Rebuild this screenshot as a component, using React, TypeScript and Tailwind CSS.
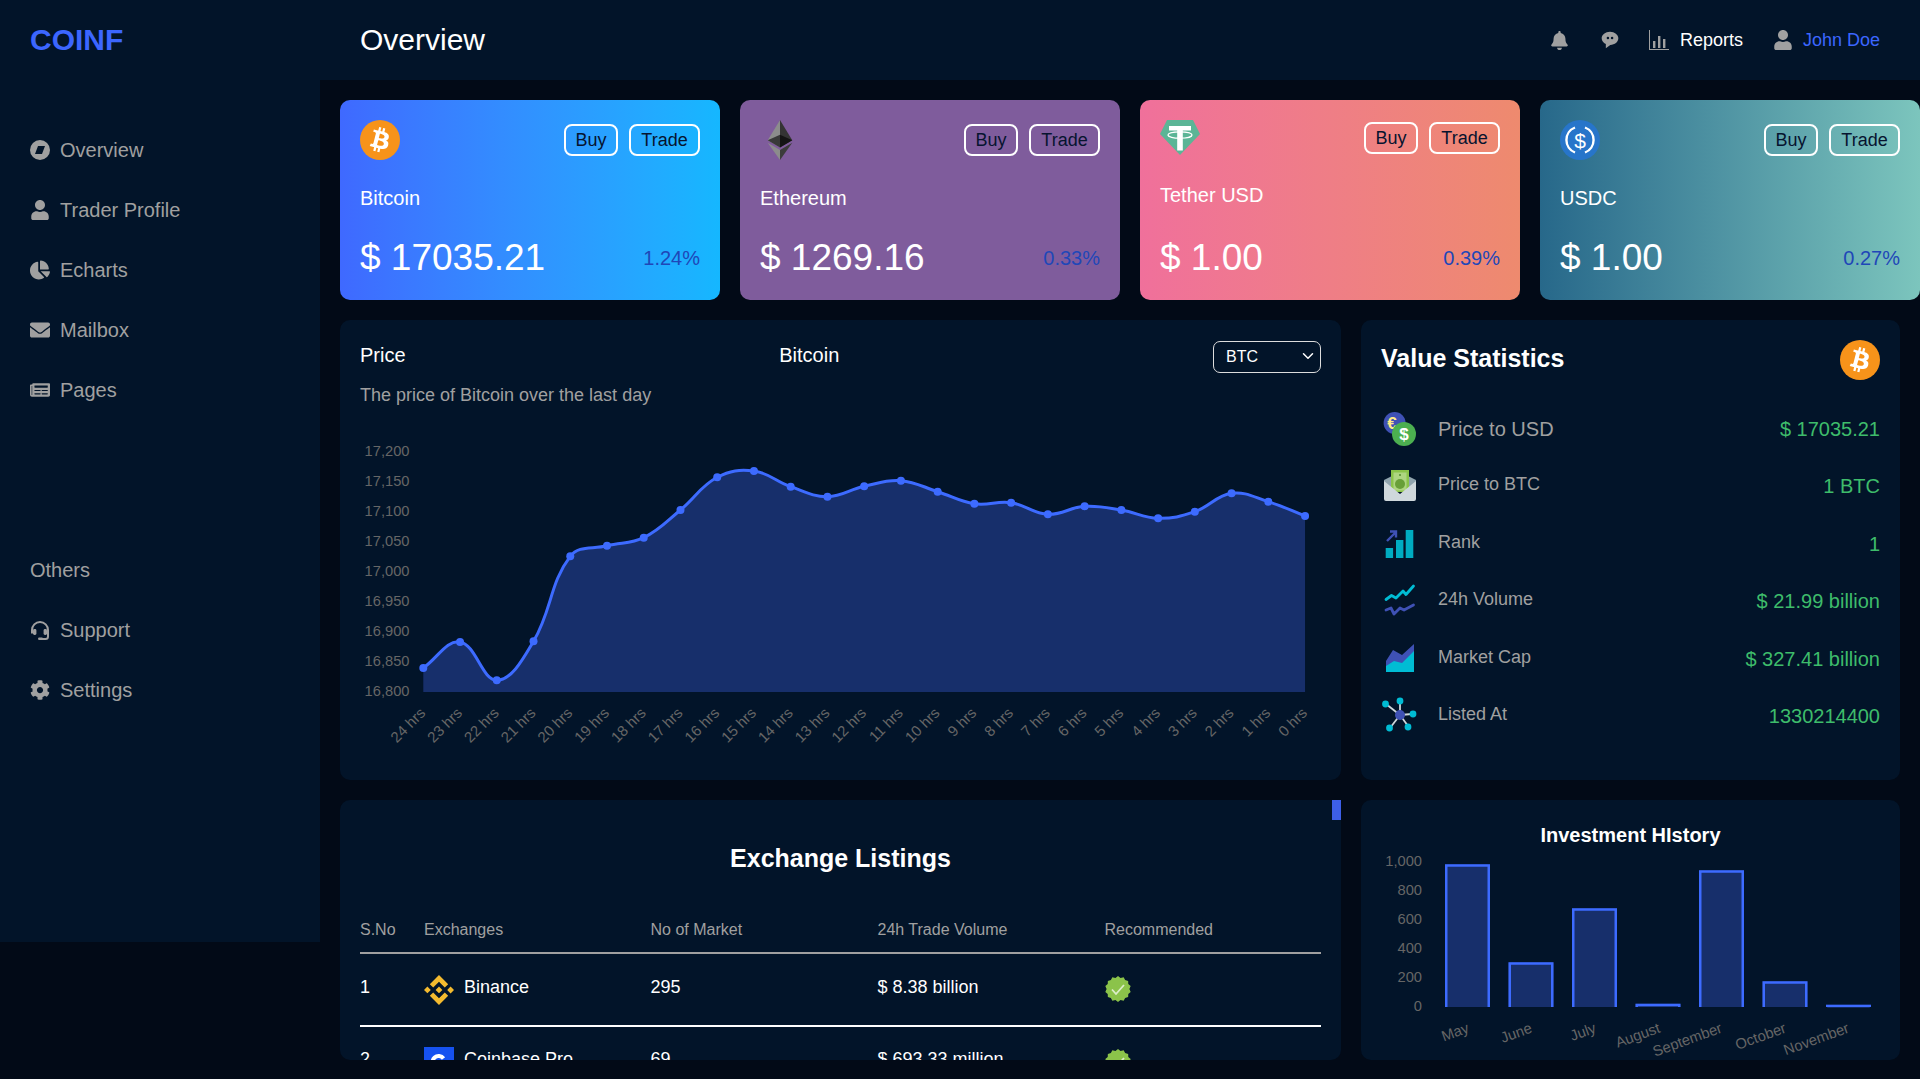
import React from "react";
import { ChevronDown } from "lucide-react";
import { BiSolidMessageRoundedDots } from "react-icons/bi";
import { FaBell, FaUser, FaChartPie, FaEnvelope, FaNewspaper, FaCog } from "react-icons/fa";
import { SiBinance } from "react-icons/si";

const NAVY = "#021429";

function BtcIcon({ className = "" }: { className?: string }) {
  return (
    <svg viewBox="0 0 64 64" className={className}>
      <circle cx="32" cy="32" r="32" fill="#f7931a" />
      <path fill="#fff" d="M46.11 27.441c.636-4.258-2.606-6.547-7.039-8.074l1.438-5.768-3.512-.875-1.4 5.616c-.922-.23-1.87-.447-2.812-.662l1.41-5.653-3.509-.875-1.439 5.766c-.764-.174-1.514-.346-2.242-.527l.004-.018-4.842-1.209-.934 3.75s2.605.597 2.55.634c1.422.355 1.68 1.296 1.636 2.042l-1.638 6.571c.098.025.225.061.365.117l-.37-.092-2.297 9.205c-.174.432-.615 1.08-1.609.834.035.051-2.552-.637-2.552-.637l-1.743 4.02 4.57 1.139c.85.213 1.683.436 2.502.646l-1.453 5.835 3.507.875 1.44-5.772c.957.26 1.887.5 2.797.726L27.504 50.8l3.511.875 1.453-5.823c5.987 1.133 10.49.676 12.383-4.738 1.527-4.36-.075-6.875-3.225-8.516 2.294-.531 4.022-2.04 4.483-5.157zM38.087 38.69c-1.086 4.36-8.426 2.004-10.807 1.412l1.928-7.729c2.38.594 10.011 1.77 8.88 6.317zm1.085-11.312c-.99 3.966-7.1 1.951-9.083 1.457l1.748-7.01c1.983.494 8.367 1.416 7.335 5.553z" />
    </svg>
  );
}

function EthIcon() {
  return (
    <svg viewBox="-80.5 0 417 417" className="w-10 h-10">
      <polygon fill="#343434" points="127.96,0 125.17,9.5 125.17,285.17 127.96,287.96 255.92,212.32" />
      <polygon fill="#8C8C8C" points="127.96,0 0,212.32 127.96,287.96 127.96,154.16" />
      <polygon fill="#3C3C3B" points="127.96,312.19 126.39,314.11 126.39,412.31 127.96,416.91 256,236.59" />
      <polygon fill="#8C8C8C" points="127.96,416.91 127.96,312.19 0,236.59" />
      <polygon fill="#141414" points="127.96,287.96 255.92,212.32 127.96,154.16" />
      <polygon fill="#393939" points="0,212.32 127.96,287.96 127.96,154.16" />
    </svg>
  );
}

function TetherIcon() {
  return (
    <svg viewBox="0 0 40 35" className="w-10 h-[35px]">
      <polygon fill="#5bb596" points="7,0 33,0 40,14 20,35 0,14" />
      <path fill="#fff" d="M9 6h22v4.5h-8.2v20h-5.6v-20H9z" />
      <ellipse cx="20" cy="15" rx="12" ry="3.2" fill="none" stroke="#fff" strokeWidth="1.3" />
    </svg>
  );
}

function UsdcIcon() {
  return (
    <svg viewBox="0 0 40 40" className="w-10 h-10">
      <circle cx="20" cy="20" r="20" fill="#2775ca" />
      <path d="M15 7.5a13.4 13.4 0 0 0 0 25M25 7.5a13.4 13.4 0 0 1 0 25" fill="none" stroke="#fff" strokeWidth="2.4" />
      <text x="20" y="27.5" textAnchor="middle" fontSize="21" fill="#fff" fontFamily="Liberation Sans, sans-serif">$</text>
    </svg>
  );
}

type CardData = {
  name: string; price: string; pct: string; bg: string; icon: React.ReactNode; tight?: boolean;
};

const cards: CardData[] = [
  { name: "Bitcoin", price: "$ 17035.21", pct: "1.24%", bg: "bg-gradient-to-r from-[#3f69ff] to-[#15b7ff]", icon: <BtcIcon className="w-10 h-10" /> },
  { name: "Ethereum", price: "$ 1269.16", pct: "0.33%", bg: "bg-[#7f5c9c]", icon: <EthIcon /> },
  { name: "Tether USD", price: "$ 1.00", pct: "0.39%", bg: "bg-gradient-to-r from-[#f0709b] to-[#ee8a6e]", icon: <TetherIcon />, tight: true },
  { name: "USDC", price: "$ 1.00", pct: "0.27%", bg: "bg-gradient-to-r from-[#27688a] to-[#7cc5bd]", icon: <UsdcIcon /> },
];

function CoinCard({ c }: { c: CardData }) {
  return (
    <div className={`w-[380px] h-[200px] shrink-0 rounded-[10px] p-5 flex flex-col ${c.bg}`}>
      <div className={`flex items-center justify-between ${c.tight ? "h-[35px]" : "h-10"}`}>
        {c.icon}
        <div className="flex gap-[11px]">
          <button className="w-[54px] h-8 border-2 border-white rounded-lg text-[18px] leading-none text-[#07142f]">Buy</button>
          <button className="w-[71px] h-8 border-2 border-white rounded-lg text-[18px] leading-none text-[#07142f]">Trade</button>
        </div>
      </div>
      <div className={`text-white text-[20px] leading-[23px] ${c.tight ? "mt-[29px]" : "mt-[27px]"}`}>{c.name}</div>
      <div className="mt-auto flex items-end justify-between">
        <div className="text-white text-[37px] leading-[42px] mb-[1px]">{c.price}</div>
        <div className="text-[#1f47b8] text-[20px] leading-[23px] mb-[10px]">{c.pct}</div>
      </div>
    </div>
  );
}

function NavItem({ icon, label }: { icon: React.ReactNode; label: string }) {
  return (
    <div className="h-[60px] flex items-center gap-[10px] text-[20px] text-[#a0a0a0]">
      <span className="w-5 h-5 flex items-center justify-center text-[#a0a0a0]">{icon}</span>
      <span>{label}</span>
    </div>
  );
}

function CompassIcon() {
  return (
    <svg viewBox="0 0 20 20" className="w-5 h-5">
      <circle cx="10" cy="10" r="10" fill="#a0a0a0" />
      <polygon points="8,6 15,6 12,14 5,14" fill={NAVY} />
    </svg>
  );
}

function HeadsetIcon() {
  return (
    <svg viewBox="0 0 20 20" className="w-5 h-5" fill="#a0a0a0">
      <path d="M2 13.5V10a8 8 0 0 1 16 0v6.5a2.5 2.5 0 0 1-2.5 2.5H12" fill="none" stroke="#a0a0a0" strokeWidth="2" />
      <rect x="3" y="9" width="3.4" height="6" rx="1.4" />
      <rect x="13.6" y="9" width="3.4" height="6" rx="1.4" />
      <rect x="8" y="17.6" width="5" height="2.4" rx="1.2" />
    </svg>
  );
}

function ReportsIcon() {
  return (
    <svg viewBox="0 0 20 20" className="w-5 h-5" fill="#a0a0a0">
      <path d="M0 0h1v19h19v1H0z" />
      <rect x="4" y="11" width="2.4" height="7" />
      <rect x="9" y="6" width="2.4" height="12" />
      <rect x="14" y="9" width="2.4" height="9" />
    </svg>
  );
}

const priceY = [668, 642, 680.3, 641.3, 556.3, 545.7, 537.7, 510, 477.3, 471, 486.7, 496.7, 486.3, 480.7, 491.7, 503.7, 502.7, 514.3, 506.3, 510, 518.3, 511.7, 493.3, 501.7, 516];
const X0 = 423.3;
const DX = 36.74;
const pts = priceY.map((y, i) => ({ x: X0 + DX * i, y }));

function splinePath(p: { x: number; y: number }[], t = 0.4) {
  const cps = p.map((cur, i) => {
    const prev = p[Math.max(i - 1, 0)];
    const next = p[Math.min(i + 1, p.length - 1)];
    const d01 = Math.hypot(cur.x - prev.x, cur.y - prev.y);
    const d12 = Math.hypot(next.x - cur.x, next.y - cur.y);
    const s = d01 + d12 || 1;
    const fa = (t * d01) / s;
    const fb = (t * d12) / s;
    return {
      px: cur.x - fa * (next.x - prev.x),
      py: cur.y - fa * (next.y - prev.y),
      nx: cur.x + fb * (next.x - prev.x),
      ny: cur.y + fb * (next.y - prev.y),
    };
  });
  let d = `M${p[0].x} ${p[0].y}`;
  for (let i = 1; i < p.length; i++) {
    d += `C${cps[i - 1].nx} ${cps[i - 1].ny} ${cps[i].px} ${cps[i].py} ${p[i].x} ${p[i].y}`;
  }
  return d;
}

const FONT = "Liberation Sans, Arial, sans-serif";

function LineChart() {
  const line = splinePath(pts);
  const area = `${line}L${pts[pts.length - 1].x} 692L${pts[0].x} 692Z`;
  const yLabels = ["17,200", "17,150", "17,100", "17,050", "17,000", "16,950", "16,900", "16,850", "16,800"];
  return (
    <svg viewBox="340 430 1000 350" className="block w-[1000px] h-[350px] -ml-5 mt-6" fontFamily={FONT}>
      {yLabels.map((l, i) => (
        <text key={l} x="409.5" y={455.7 + i * 30} textAnchor="end" fontSize="14.7" fill="#666">{l}</text>
      ))}
      <path d={area} fill="#172f6b" />
      <path d={line} fill="none" stroke="#3d6bff" strokeWidth="3" />
      {pts.map((p, i) => (
        <circle key={i} cx={p.x} cy={p.y} r="4" fill="#3d6bff" />
      ))}
      {pts.map((p, i) => (
        <text key={i} transform={`translate(${p.x + 3} ${714}) rotate(-45)`} textAnchor="end" fontSize="15" fill="#666">{`${24 - i} hrs`}</text>
      ))}
    </svg>
  );
}

function BarChart() {
  const bars = [
    [1445, 864.3], [1508.5, 962.3], [1572, 908.3], [1635.5, 1003.7], [1699, 870.3], [1762.5, 981.3], [1826, 1004.7],
  ];
  const months = [["May", 1470], ["June", 1533], ["July", 1597], ["August", 1661], ["September", 1723], ["October", 1787], ["November", 1850]] as const;
  const y = ["1,000", "800", "600", "400", "200", "0"];
  return (
    <svg viewBox="1361 850 539 210" className="block w-[539px] h-[210px]" fontFamily={FONT}>
      {y.map((l, i) => (
        <text key={l} x="1422" y={866.2 + i * 29} textAnchor="end" fontSize="14.7" fill="#666">{l}</text>
      ))}
      {bars.map(([x, t], i) => (
        <g key={i}>
          <rect x={x} y={t} width="45" height={1007 - t} fill="#172f6b" />
          <path d={`M${x + 1.25} 1007V${t + 1.25}H${x + 43.75}V1007`} fill="none" stroke="#3d6bff" strokeWidth="2.5" />
        </g>
      ))}
      {months.map(([m, x]) => (
        <text key={m} transform={`translate(${x} 1032) rotate(-20)`} textAnchor="end" fontSize="14.8" fill="#666">{m}</text>
      ))}
    </svg>
  );
}

const StatIcons = {
  usd: (
    <svg viewBox="0 0 40 40" className="w-10 h-10">
      <circle cx="14.6" cy="14" r="11" fill="#3f51b5" />
      <text x="12" y="20" textAnchor="middle" fontSize="17" fontWeight="700" fill="#ffeb8a" fontFamily={FONT}>€</text>
      <circle cx="24" cy="25" r="12" fill="#4caf50" />
      <text x="24" y="31" textAnchor="middle" fontSize="17" fontWeight="700" fill="#fff" fontFamily={FONT}>$</text>
    </svg>
  ),
  env: (
    <svg viewBox="0 0 40 40" className="w-10 h-10">
      <polygon points="4,14 20,6 36,14 36,24 4,24" fill="#90a4ae" />
      <rect x="11" y="4" width="18" height="22" fill="#8bc34a" />
      <rect x="13.5" y="6.5" width="13" height="18" fill="#aed581" />
      <circle cx="20" cy="18" r="5" fill="#689f38" />
      <circle cx="20" cy="9" r="1" fill="#558b2f" />
      <path d="M4 15L20 28L36 15V33a2 2 0 0 1-2 2H6a2 2 0 0 1-2-2z" fill="#cfd8dc" />
    </svg>
  ),
  rank: (
    <svg viewBox="0 0 40 40" className="w-10 h-10">
      <rect x="5.7" y="24" width="7.4" height="10" fill="#00acc1" />
      <rect x="16" y="16" width="7.4" height="18" fill="#00acc1" />
      <rect x="25.7" y="6" width="7.6" height="28" fill="#00acc1" />
      <path d="M7 17L15 9M10 7.5h6v6" fill="none" stroke="#3f51b5" strokeWidth="2.4" />
    </svg>
  ),
  vol: (
    <svg viewBox="0 0 40 40" className="w-10 h-10">
      <path d="M6 18.5L11.5 14.5L16 17L23 10L26 13.5L33.5 5" fill="none" stroke="#00bcd4" strokeWidth="2.8" strokeLinecap="round" strokeLinejoin="round" />
      <path d="M6 29L11 27L14 33L20 27L24 29L33.5 24" fill="none" stroke="#3f51b5" strokeWidth="2.8" strokeLinecap="round" strokeLinejoin="round" />
    </svg>
  ),
  cap: (
    <svg viewBox="0 0 40 40" className="w-10 h-10">
      <polygon points="6,22 13,11 22,16 34,5 34,20 6,30" fill="#3f51b5" />
      <polygon points="6,27 14,22 22,24 34,12 34,33 6,33" fill="#00bcd4" />
    </svg>
  ),
  net: (
    <svg viewBox="0 0 40 40" className="w-10 h-10">
      <g stroke="#cfd8dc" strokeWidth="1.8">
        <line x1="20" y1="19" x2="20" y2="6" />
        <line x1="20" y1="19" x2="6" y2="8" />
        <line x1="20" y1="19" x2="32" y2="18" />
        <line x1="20" y1="19" x2="10" y2="32" />
        <line x1="20" y1="19" x2="28" y2="30" />
      </g>
      <circle cx="20" cy="19" r="5" fill="#3f51b5" />
      <circle cx="20" cy="5" r="3.4" fill="#00bcd4" />
      <circle cx="5.5" cy="8" r="3.4" fill="#00bcd4" />
      <circle cx="33" cy="18" r="3.4" fill="#00bcd4" />
      <circle cx="9.5" cy="32" r="3.4" fill="#00bcd4" />
      <circle cx="28" cy="31" r="3.4" fill="#00bcd4" />
    </svg>
  ),
};

const stats = [
  { icon: StatIcons.usd, label: "Price to USD", value: "$ 17035.21", big: true },
  { icon: StatIcons.env, label: "Price to BTC", value: "1 BTC" },
  { icon: StatIcons.rank, label: "Rank", value: "1" },
  { icon: StatIcons.vol, label: "24h Volume", value: "$ 21.99 billion" },
  { icon: StatIcons.cap, label: "Market Cap", value: "$ 327.41 billion" },
  { icon: StatIcons.net, label: "Listed At", value: "1330214400" },
];

function Seal() {
  const n = 28;
  const points = Array.from({ length: n }, (_, i) => {
    const r = i % 2 ? 13 : 11.4;
    const a = (i / n) * Math.PI * 2;
    return `${13 + r * Math.cos(a)},${13 + r * Math.sin(a)}`;
  }).join(" ");
  return (
    <svg viewBox="0 0 26 26" className="w-[26px] h-[26px] block">
      <polygon points={points} fill="#8bc34a" />
      <path d="M7 13.5l4 4.5 8-9" fill="none" stroke="#dcedc8" strokeWidth="1.8" />
    </svg>
  );
}

function CoinbaseIcon() {
  return (
    <svg viewBox="0 0 30 30" className="w-[30px] h-[30px] block">
      <rect width="30" height="30" fill="#1652f0" />
      <path d="M19.5 11.5a6 6 0 1 0 0 7" fill="none" stroke="#fff" strokeWidth="4" />
    </svg>
  );
}

const COLS = "grid grid-cols-[64px_226.5px_227px_227px_216.5px] items-center";

export default function App() {
  return (
    <div className="w-[1920px] h-[1079px] overflow-hidden bg-[#020a17] font-['Liberation_Sans',Arial,sans-serif]">
      <header className="h-20 bg-[#021429] flex items-center">
        <div className="w-[360px] pl-[30px] -mt-[2px] text-[30px] font-bold text-[#3c66ff]">COINF</div>
        <h1 className="-mt-[2px] text-[30px] text-white">Overview</h1>
        <div className="ml-auto flex items-center pr-10 text-[18px]">
          <span className="w-5 h-5 flex items-center justify-center text-[#a0a0a0] text-[19px]"><FaBell /></span>
          <span className="w-5 h-5 ml-[30px] flex items-center justify-center text-[#a0a0a0] text-[24px]"><BiSolidMessageRoundedDots /></span>
          <span className="ml-[29px]"><ReportsIcon /></span>
          <span className="ml-[11px] text-white">Reports</span>
          <span className="w-5 h-5 ml-[30px] flex items-center justify-center text-[#a0a0a0] text-[20px]"><FaUser /></span>
          <span className="ml-[10px] text-[#3c66ff]">John Doe</span>
        </div>
      </header>
      <div className="flex h-[999px]">
        <aside className="w-80 h-[862px] shrink-0 bg-[#021429] pl-[30px] pt-10">
          <NavItem icon={<CompassIcon />} label="Overview" />
          <NavItem icon={<FaUser className="text-[20px]" />} label="Trader Profile" />
          <NavItem icon={<FaChartPie className="text-[20px]" />} label="Echarts" />
          <NavItem icon={<FaEnvelope className="text-[20px]" />} label="Mailbox" />
          <NavItem icon={<FaNewspaper className="text-[20px]" />} label="Pages" />
          <div className="mt-[120px] h-[60px] flex items-center text-[20px] text-[#a0a0a0]">Others</div>
          <NavItem icon={<HeadsetIcon />} label="Support" />
          <NavItem icon={<FaCog className="text-[20px]" />} label="Settings" />
        </aside>
        <main className="w-[1600px] h-[999px] pl-5 pt-5 pb-[19px] flex flex-col gap-5 overflow-hidden">
          <div className="flex gap-5">
            {cards.map((c) => <CoinCard key={c.name} c={c} />)}
          </div>
          <div className="flex gap-5 h-[460px] shrink-0">
            <section className="w-[1001px] bg-[#021429] rounded-[10px] px-5 pt-5">
              <div className="flex items-center justify-between h-8 text-white text-[20px]">
                <span className="-mt-[2px]">Price</span>
                <span className="-mt-[2px]">Bitcoin</span>
                <div className="relative w-[108px] h-8">
                  <select className="appearance-none w-full h-full border border-[#dddddd] rounded-[7px] pl-3 text-[16px] text-white bg-transparent">
                    <option className="text-black">BTC</option>
                  </select>
                  <ChevronDown className="absolute right-1 top-[7px] w-[18px] h-[18px] text-white pointer-events-none" />
                </div>
              </div>
              <p className="mt-[13px] text-[18px] leading-[21px] text-[#a0a0a0]">The price of Bitcoin over the last day</p>
              <LineChart />
            </section>
            <section className="w-[539px] bg-[#021429] rounded-[10px] p-5">
              <div className="flex items-center justify-between h-10 mb-5">
                <h2 className="text-[25px] font-bold text-white -mt-[3px]">Value Statistics</h2>
                <BtcIcon className="w-10 h-10" />
              </div>
              <div className="flex flex-col">
                {stats.map((s) => (
                  <div key={s.label} className="h-[57.5px] flex items-center -ml-[1px]">
                    {s.icon}
                    <span className={s.big ? "ml-[18px] text-[20px] text-[#a0a0a0]" : "ml-[18px] text-[18px] text-[#a0a0a0] pb-[3px]"}>{s.label}</span>
                    <span className="ml-auto text-[20px] text-[#3ebc6b]">{s.value}</span>
                  </div>
                ))}
              </div>
            </section>
          </div>
          <div className="flex gap-5 flex-1 min-h-0">
            <section className="relative w-[1001px] bg-[#021429] rounded-[10px]">
              <div className="absolute right-0 top-0 w-[9px] h-5 bg-[#3d5fe8]" />
              <div className="h-full overflow-hidden rounded-[10px] px-5">
                <h2 className="pt-[44px] text-center text-[25px] leading-[28px] font-bold text-white">Exchange Listings</h2>
                <div className={`${COLS} mt-[42px] h-[40px] border-b-2 border-[#a0a0a0] text-[16px] text-[#a0a0a0] pb-[7px]`}>
                  <span>S.No</span><span>Exchanges</span><span>No of Market</span><span>24h Trade Volume</span><span>Recommended</span>
                </div>
                <div className={`${COLS} h-[73px] border-b-2 border-white text-[18px] text-white`}>
                  <span className="-mt-1">1</span>
                  <span className="flex items-center gap-[10px]">
                    <SiBinance className="w-[30px] h-[30px] text-[#f3ba2f]" />
                    <span className="-mt-1">Binance</span>
                  </span>
                  <span className="-mt-1">295</span>
                  <span className="-mt-1">$ 8.38 billion</span>
                  <span className="-mt-[2px]"><Seal /></span>
                </div>
                <div className={`${COLS} h-[73px] text-[18px] text-white`}>
                  <span className="-mt-2">2</span>
                  <span className="flex items-center gap-[10px]">
                    <span className="-mt-1"><CoinbaseIcon /></span>
                    <span className="-mt-2">Coinbase Pro</span>
                  </span>
                  <span className="-mt-2">69</span>
                  <span className="-mt-2">$ 693.33 million</span>
                  <span className="-mt-[3px]"><Seal /></span>
                </div>
              </div>
            </section>
            <section className="w-[539px] bg-[#021429] rounded-[10px] overflow-hidden">
              <h2 className="h-[50px] pt-6 text-center text-[20px] leading-[23px] font-bold text-white">Investment HIstory</h2>
              <BarChart />
            </section>
          </div>
        </main>
      </div>
    </div>
  );
}
